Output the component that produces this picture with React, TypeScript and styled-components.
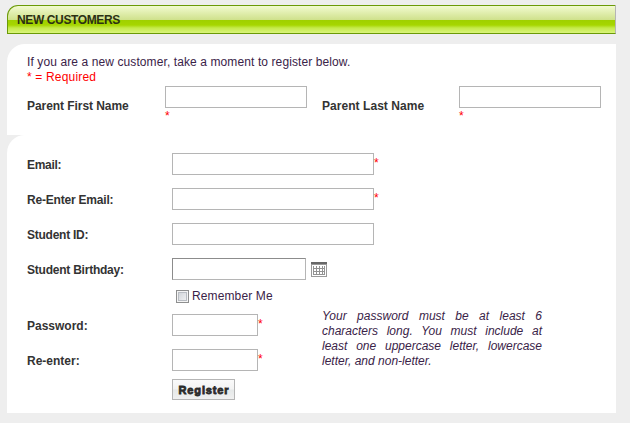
import React from "react";
import styled, { createGlobalStyle } from "styled-components";

const GlobalStyle = createGlobalStyle`
  * { box-sizing: border-box; }
  body {
    margin: 0;
    background: #eeeeee;
    font: 12px/15px Arial, "Liberation Sans", sans-serif;
    color: #3a2348;
    overflow: hidden;
  }
`;

const Page = styled.main`
  width: 616px;
  height: 423px;
  padding: 5px 0 0 7px;
`;

const TitleBar = styled.header`
  height: 29px;
  padding: 0 9px;
  border: 1px solid #6b9a08;
  border-right-color: #b5b5b5;
  border-top-left-radius: 11px;
  background: linear-gradient(
    #f1fad0 0, #edf7c6 2px, #cfe18b 14px,
    #9fd000 14px, #a6d600 19px, #c5ea4b 22px, #d9f47c 27px
  );
`;

const Title = styled.h1`
  margin: 0;
  font-size: 12px;
  line-height: 28px;
  letter-spacing: -0.38px;
  color: #2c3013;
`;

const Panel = styled.section<{ $height: number }>`
  height: ${(p) => p.$height}px;
  padding-left: 20px;
  border-top-left-radius: 18px;
  background: #fff;
`;

const NamePanel = styled(Panel)`
  margin-top: 10px;
  padding-top: 11px;
`;

const AccountPanel = styled(Panel)`
  padding-top: 18px;
`;

const Intro = styled.p<{ $spacing: number; $red?: boolean }>`
  margin: 0;
  letter-spacing: ${(p) => p.$spacing}px;
  color: ${(p) => (p.$red ? "#ff0000" : "inherit")};
`;

const NameGrid = styled.div`
  display: grid;
  grid-template-columns: 138px 157px 137px 142px;
  margin-top: 1px;
`;

const Label = styled.label<{ $spacing?: number }>`
  font-weight: bold;
  color: #333333;
  white-space: nowrap;
  letter-spacing: ${(p) => p.$spacing ?? 0}px;
`;

const NameLabel = styled(Label)`
  padding-top: 13px;
`;

const NameField = styled.div`
  display: flex;
  flex-direction: column;
`;

const Input = styled.input<{ $width: number; $dark?: boolean }>`
  display: block;
  flex-shrink: 0;
  width: ${(p) => p.$width}px;
  height: 22px;
  margin: 0;
  padding: 2px 4px;
  border: 1px solid #b5b5b5;
  border-top-color: ${(p) => (p.$dark ? "#8c8c8c" : "#b5b5b5")};
  border-left-color: ${(p) => (p.$dark ? "#8c8c8c" : "#b5b5b5")};
  border-radius: 0;
  outline: none;
  background: #fff;
  font: inherit;
`;

const Star = styled.span`
  padding-top: 1px;
  color: #ff0000;
`;

const Form = styled.div`
  display: grid;
  grid-template-columns: 145px 150px 220px;
  grid-template-rows: repeat(3, 35px) 31px 25px 35px 30px 21px;
`;

const RowLabel = styled(Label)`
  grid-column: 1;
  padding-top: 5px;
`;

const Field = styled.div`
  grid-column: 2;
  display: flex;
  align-items: flex-start;

  ${Star} { padding-top: 3px; }
`;

const Remember = styled.label`
  grid-column: 2;
  display: flex;
  align-items: flex-start;
  padding: 1px 0 0 4px;
  letter-spacing: 0.12px;
`;

const CheckBox = styled.span`
  width: 13px;
  height: 13px;
  margin-right: 3px;
  border: 1px solid #8e8f8f;
  background: linear-gradient(135deg, #cbcfd5, #f6f6f6);
  box-shadow: inset 0 0 0 1px #f4f4f4, inset 0 0 0 2px #b9bdc3;
`;

const CheckText = styled.span`
  margin-top: -1px;
`;

const CalendarIcon = styled.svg`
  display: block;
  flex-shrink: 0;
  margin: 4px 0 0 5px;
`;

const Hint = styled.p`
  grid-column: 3;
  grid-row: 6 / 9;
  margin: -5px 0 0;
  font-style: italic;
  text-align: justify;
`;

const Register = styled.button`
  grid-column: 2;
  width: 63px;
  height: 21px;
  padding: 2px 0 0;
  border: 1px solid #b5b5b5;
  border-radius: 0;
  background: linear-gradient(#fafafa 0, #f3f3f3 9px, #e5e8e8 10px, #f0f0f0 100%);
  font: 900 11px/17px "Arial Black", "Liberation Sans", sans-serif;
  letter-spacing: 0.85px;
  text-indent: 1px;
  color: #2b2b2b;
  -webkit-text-stroke: 0.8px #2b2b2b;
`;

const Calendar = () => (
  <CalendarIcon width="16" height="15" viewBox="0 0 16 15" shapeRendering="crispEdges">
    <path d="M0 0H16V15H0Z" fill="#999" />
    <path d="M0 0H16V2H0Z" fill="#686868" />
    <path d="M1 3H15V14H1Z" fill="#fff" />
    <path d="M2 4H14V13H2Z" fill="#929292" />
    <path
      d="M3 4h2v2H3zM6 4h2v2H6zM9 4h2v2H9zM12 4h1v2h-1zM3 7h2v2H3zM6 7h2v2H6zM9 7h2v2H9zM12 7h1v2h-1zM3 10h2v2H3zM6 10h2v2H6zM9 10h2v2H9zM12 10h1v2h-1z"
      fill="#fff"
    />
  </CalendarIcon>
);

const Backing = styled.div`
  background: #eeeeee;
`;

interface RowProps {
  id: string;
  label: string;
  width: number;
  spacing?: number;
  required?: boolean;
  calendar?: boolean;
  type?: string;
}

const Row = ({ id, label, width, spacing, required, calendar, type = "text" }: RowProps) => (
  <>
    <RowLabel htmlFor={id} $spacing={spacing}>{label}</RowLabel>
    <Field>
      <Input id={id} type={type} $width={width} $dark={calendar} />
      {required && <Star>*</Star>}
      {calendar && <Calendar />}
    </Field>
  </>
);

export default function App() {
  return (
    <>
      <GlobalStyle />
      <Page>
        <TitleBar>
          <Title>NEW CUSTOMERS</Title>
        </TitleBar>
        <NamePanel $height={91}>
          <Intro $spacing={0.1}>If you are a new customer, take a moment to register below.</Intro>
          <Intro $spacing={0.17} $red>* = Required</Intro>
          <NameGrid>
            <NameLabel htmlFor="first" $spacing={-0.06}>Parent First Name</NameLabel>
            <NameField>
              <Input id="first" $width={142} />
              <Star>*</Star>
            </NameField>
            <NameLabel htmlFor="last" $spacing={0.05}>Parent Last Name</NameLabel>
            <NameField>
              <Input id="last" $width={142} />
              <Star>*</Star>
            </NameField>
          </NameGrid>
        </NamePanel>
        <Backing>
          <AccountPanel $height={278}>
            <Form>
              <Row id="email" label="Email:" width={202} spacing={-0.3} required />
              <Row id="email2" label="Re-Enter Email:" width={202} spacing={-0.2} required />
              <Row id="student" label="Student ID:" width={202} spacing={-0.25} />
              <Row id="birthday" label="Student Birthday:" width={134} spacing={-0.23} calendar />
              <Remember>
                <CheckBox role="checkbox" aria-checked="false" />
                <CheckText>Remember Me</CheckText>
              </Remember>
              <Row id="password" label="Password:" width={86} type="password" required />
              <Row id="password2" label="Re-enter:" width={86} type="password" required />
              <Register type="button">Register</Register>
              <Hint>
                Your password must be at least 6 characters long. You must include at least one
                uppercase letter, lowercase letter, and non-letter.
              </Hint>
            </Form>
          </AccountPanel>
        </Backing>
      </Page>
    </>
  );
}
